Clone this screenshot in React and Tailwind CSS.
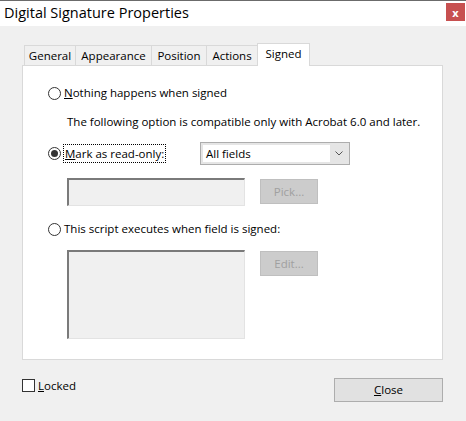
import React from "react";

const FONT = { fontFamily: '"Open Sans", "Noto Sans", sans-serif' };

function Radio({ checked }) {
  return (
    <span className="w-[13px] h-[13px] rounded-full border border-[#333333] bg-white flex items-center justify-center shrink-0">
      {checked && <span className="w-[7px] h-[7px] rounded-full bg-[#333333]" />}
    </span>
  );
}

function Tab({ label, active, w }) {
  if (active) {
    return (
      <div className={`${w} h-[23px] -mb-px -ml-px bg-white border border-[#d9d9d9] border-b-0 flex items-center justify-center relative z-10 text-black`}>
        <span className="-mt-[3px]">{label}</span>
      </div>
    );
  }
  return (
    <div className={`${w} h-[20px] bg-[#f0f0f0] border border-[#d9d9d9] border-b-0 -ml-px first:ml-0 flex items-center justify-center text-black`}>
      {label}
    </div>
  );
}

function SunkenBox({ h }) {
  return (
    <div
      className={`w-[178px] ${h} bg-[#f0f0f0] border-l-2 border-t-2 border-l-[#7a7a7a] border-t-[#7a7a7a] border-r border-b border-r-[#e3e3e3] border-b-[#e3e3e3]`}
    />
  );
}

function DisabledButton({ label }) {
  return (
    <div className="mt-px w-[58px] h-[25px] bg-[#cccccc] border border-[#bfbfbf] flex items-center justify-center text-[#a0a0a0]">
      {label}
    </div>
  );
}

export default function App() {
  return (
    <div className="w-[466px] h-[421px] bg-[#f0f0f0] flex flex-col text-[11.5px] overflow-hidden" style={FONT}>
      {/* Title bar */}
      <div className="h-[26px] bg-white border-t border-[#6b6b6b] flex items-center justify-between shrink-0">
        <span className="pl-[4px] text-[14.5px] text-black leading-none">Digital Signature Properties</span>
        <div className="mr-px mb-[3px] w-[19px] h-[18px] bg-[#c75050] flex items-center justify-center text-white text-[11px] font-bold leading-none">
          x
        </div>
      </div>

      {/* Tabs */}
      <div className="mt-[17px] ml-[24px] flex items-end">
        <Tab label="General" w="w-[52px]" />
        <Tab label="Appearance" w="w-[77px]" />
        <Tab label="Position" w="w-[56px]" />
        <Tab label="Actions" w="w-[52px]" />
        <Tab label="Signed" w="w-[53px]" active />
      </div>

      {/* Panel */}
      <div className="ml-[22px] w-[421px] h-[295px] bg-white border border-[#d9d9d9] pl-[25px] flex flex-col text-black">
        <div className="mt-[17px] h-[20px] flex items-center gap-[3px]">
          <Radio />
          <span>
            <span className="underline">N</span>othing happens when signed
          </span>
        </div>

        <div className="mt-[9px] h-[20px] flex items-center pl-[19px]">
          The following option is compatible only with Acrobat 6.0 and later.
        </div>

        <div className="mt-[10px] h-[23px] flex items-center">
          <div className="w-[152px] flex items-center gap-[2px]">
            <Radio checked />
            <span className="px-px border border-dotted border-black leading-[17px]">
              <span className="underline">M</span>ark as read-only:
            </span>
          </div>
          <div className="w-[150px] h-[23px] border border-[#adadad] bg-[#e5e5e5] flex p-[2px]">
            <div className="flex-1 bg-white flex items-center pl-[3px]">All fields</div>
            <div className="w-[17px] flex items-center justify-center">
              <svg width="8" height="5" viewBox="0 0 8 5" fill="none">
                <path d="M0.5 0.5 L4 4 L7.5 0.5" stroke="#555555" strokeWidth="1" />
              </svg>
            </div>
          </div>
        </div>

        <div className="mt-[13px] ml-[19px] flex items-start gap-[15px]">
          <SunkenBox h="h-[28px]" />
          <DisabledButton label="Pick..." />
        </div>

        <div className="mt-[13px] h-[20px] flex items-center gap-[3px]">
          <Radio />
          <span>This script executes when field is signed:</span>
        </div>

        <div className="mt-[11px] ml-[19px] flex items-start gap-[15px]">
          <SunkenBox h="h-[89px]" />
          <DisabledButton label="Edit..." />
        </div>
      </div>

      {/* Footer */}
      <div className="mt-[18px] ml-[22px] w-[421px] flex items-start justify-between">
        <div className="flex items-center gap-[3px] h-[13px] mt-px">
          <span className="w-[13px] h-[13px] border border-[#333333] bg-white" />
          <span className="text-black">
            <span className="underline">L</span>ocked
          </span>
        </div>
        <div className="w-[109px] h-[24px] bg-[#e1e1e1] border border-[#adadad] flex items-center justify-center text-black">
          <span>
            <span className="underline">C</span>lose
          </span>
        </div>
      </div>
    </div>
  );
}
